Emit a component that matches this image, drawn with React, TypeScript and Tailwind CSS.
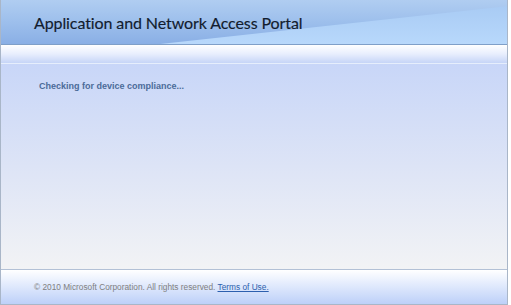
export default function App() {
  return (
    <div className="w-[511px] h-[305px] bg-white overflow-hidden">
      <div className="w-[508px] h-[305px] flex flex-col border-l border-r border-b border-[#a9b6c8] font-['Liberation_Sans',Arial,sans-serif]">
        {/* Header */}
        <div className="relative h-[45px] shrink-0 border-b border-[#7f9fc8] bg-gradient-to-b from-[#b0cdf1] via-[#9dbfec] to-[#8aafe5] overflow-hidden">
          <div className="absolute inset-0 bg-gradient-to-b from-[#a6c9f3] to-[#b8d8fb] [clip-path:polygon(150px_45px,508px_6px,508px_45px)]" />
          <div className="relative h-full flex items-center pl-[33px] pt-[2px]">
            <h1 className="text-[16px] text-[#121c2e] font-['Lato',sans-serif] tracking-[-0.1px] [-webkit-text-stroke:0.15px_#121c2e]">
              Application and Network Access Portal
            </h1>
          </div>
        </div>

        {/* Band */}
        <div className="h-[19px] shrink-0 border-b border-[#e6eefc] bg-gradient-to-b from-[#ffffff] via-[#e8eefd] to-[#c6d5f7]" />

        {/* Content */}
        <div className="flex-1 bg-gradient-to-b from-[#c8d6f8] via-[#dde4f6] to-[#f2f3f5] pl-[38px] pt-[16px]">
          <p className="text-[9px] font-bold text-[#4b6b99]">Checking for device compliance...</p>
        </div>

        {/* Footer */}
        <div className="h-[35px] shrink-0 border-t border-[#b3c1d6] bg-gradient-to-b from-[#ffffff] to-[#bdd0f8] flex items-center pl-[33px]">
          <p className="text-[8.3px] text-[#808080]">
            © 2010 Microsoft Corporation. All rights reserved.{" "}
            <span className="text-[#2c5fae] underline">Terms of Use.</span>
          </p>
        </div>
      </div>
    </div>
  );
}
